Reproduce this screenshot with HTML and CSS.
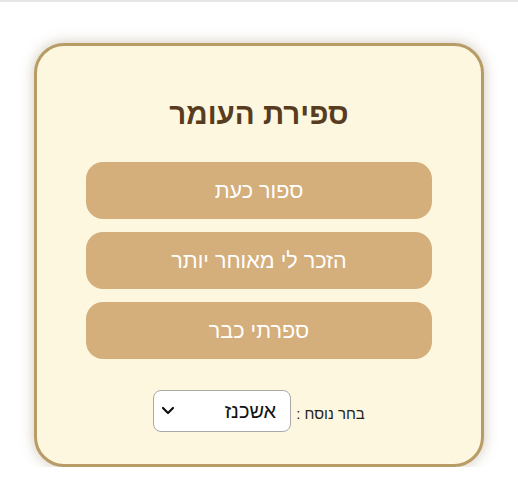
FILE: index.html
```html
<!DOCTYPE html>
<html lang="he" dir="rtl">
<head>
<meta charset="utf-8">
<link rel="stylesheet" href="styles.css">
</head>
<body>
<div class="topbar"></div>
<main class="page">
  <section class="card">
    <h1 class="title">ספירת העומר</h1>
    <div class="actions">
      <button class="btn">ספור כעת</button>
      <button class="btn">הזכר לי מאוחר יותר</button>
      <button class="btn">ספרתי כבר</button>
    </div>
    <div class="nusach">
      <label class="nusach-label" for="nusach">בחר נוסח :</label>
      <div class="select-wrap">
        <select id="nusach" class="select">
          <option>אשכנז</option>
          <option>ספרד</option>
          <option>עדות המזרח</option>
        </select>
        <svg class="chev" width="14" height="9" viewBox="0 0 14 9"><path d="M2 2 L7 7 L12 2" fill="none" stroke="#111" stroke-width="2.2" stroke-linecap="round" stroke-linejoin="round"/></svg>
      </div>
    </div>
  </section>
</main>
</body>
</html>
```
FILE: styles.css
```css
* { box-sizing: border-box; }
html, body { margin: 0; padding: 0; background: #fff; }
body {
  font-family: "Liberation Sans", Arial, sans-serif;
}
.topbar {
  height: 2px;
  background: #e6e6e6;
}
.page {
  display: flex;
  justify-content: center;
  padding-top: 41px;
}
.card {
  width: 450px;
  background: #fef7e0;
  border: 3px solid #b89c66;
  border-radius: 30px;
  box-shadow: 0 0 14px rgba(120, 95, 50, 0.35);
  padding: 52px 49px 32px;
}
.title {
  margin: 0 0 32px;
  text-align: center;
  font-size: 29.5px;
  line-height: 32px;
  font-weight: bold;
  color: #583c1f;
}
.actions {
  display: flex;
  flex-direction: column;
  gap: 13px;
}
.btn {
  height: 57px;
  border: 0;
  border-radius: 17px;
  background: #d4ae7b;
  color: #fff;
  font-family: inherit;
  font-size: 21.6px;
  padding: 0;
}
.nusach {
  margin-top: 31px;
  display: flex;
  justify-content: center;
  align-items: center;
  gap: 5px;
}
.nusach-label {
  font-size: 15px;
  color: #222;
  margin-top: 4px;
}
.select-wrap {
  position: relative;
  width: 138px;
  height: 42px;
}
.select {
  appearance: none;
  -webkit-appearance: none;
  width: 100%;
  height: 100%;
  border: 1px solid #a9a9a9;
  border-radius: 8px;
  background: #fff;
  font-family: inherit;
  font-size: 20px;
  color: #111;
  padding: 0 14px 0 30px;
  direction: rtl;
  text-align: right;
  text-align-last: right;
}
.chev {
  position: absolute;
  left: 8px;
  top: 16px;
  pointer-events: none;
}
```
